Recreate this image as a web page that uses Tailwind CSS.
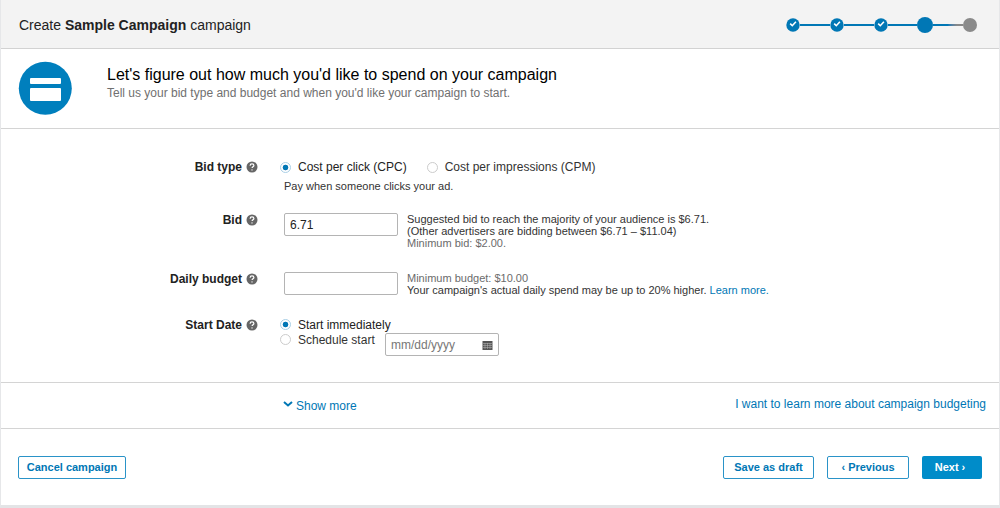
<!DOCTYPE html>
<html lang="en">
<head>
<meta charset="utf-8">
<meta name="viewport" content="width=device-width, initial-scale=1">
<title>Create campaign</title>
<script src="https://cdn.jsdelivr.net/npm/@tailwindcss/browser@4"></script>
</head>
<body class="min-h-screen bg-white font-['Liberation_Sans',Arial,sans-serif] text-[12px] text-[#333]">
<svg class="hidden" aria-hidden="true">
  <symbol id="help" viewBox="0 0 12 12"><circle cx="6" cy="6" r="5.5" fill="#666"/><path d="M4.1 4.7C4.1 3.5 4.9 2.9 6 2.9s1.9.7 1.9 1.7c0 1.2-1.8 1.3-1.8 2.5" fill="none" stroke="#fff" stroke-width="1.2"/><circle cx="6" cy="8.9" r=".7" fill="#fff"/></symbol>
  <symbol id="done" viewBox="0 0 14 14"><circle cx="7" cy="7" r="6.7" fill="#0077b5"/><path d="M4.2 5.6l2.1 2.1 3.6-3.9" fill="none" stroke="#fff" stroke-width="1.6"/></symbol>
</svg>
<div class="flex min-h-screen flex-col border-x border-b-3 border-x-[#e6e7e9] border-b-[#e3e4e6]">
  <header class="flex h-[49px] items-center justify-between border-b border-[#d2d2d2] bg-[#f3f3f3] pt-px pr-[22px] pl-[18px]">
    <h1 class="text-[14px] leading-5 text-[#222]">Create <strong>Sample Campaign</strong> campaign</h1>
    <div class="flex w-[191px] items-center" role="img" aria-label="Step 4 of 5">
      <svg class="size-[14px]"><use href="#done"/></svg>
      <span class="h-[2px] flex-1 bg-[#0077b5]"></span>
      <svg class="size-[14px]"><use href="#done"/></svg>
      <span class="h-[2px] flex-1 bg-[#0077b5]"></span>
      <svg class="size-[14px]"><use href="#done"/></svg>
      <span class="h-[2px] flex-1 bg-[#0077b5]"></span>
      <span class="size-4 rounded-full bg-[#0077b5]"></span>
      <span class="h-[2px] flex-1 bg-linear-to-r from-[#0077b5] from-50% to-[#888] to-80%"></span>
      <span class="size-[14px] rounded-full bg-[#8a8a8a]"></span>
    </div>
  </header>

  <section class="flex h-20 border-b border-[#d4d4d4] pt-[12px] pl-[17px]">
    <svg class="size-[54px]" viewBox="0 0 54 54" aria-hidden="true"><circle cx="27.3" cy="27.3" r="26.5" fill="#007fbd"/><rect x="12" y="17" width="31" height="6" rx="1" fill="#fff"/><rect x="12" y="27" width="31" height="13" rx="1" fill="#fff"/></svg>
    <div class="pt-[4px] pl-[35px]">
      <h2 class="text-[16px] leading-5 text-black">Let's figure out how much you'd like to spend on your campaign</h2>
      <p class="text-[12px] leading-4 text-[#707070]">Tell us your bid type and budget and when you'd like your campaign to start.</p>
    </div>
  </section>

  <form id="campaign" class="flex h-[254px] flex-col border-b border-[#d4d4d4] pt-[30px]">
    <div class="flex h-[54px]" role="radiogroup" aria-labelledby="bidtype">
      <div class="flex h-4 w-[257px] items-center justify-end gap-1"><span id="bidtype" class="font-bold text-[#222]">Bid type</span><svg class="size-3"><use href="#help"/></svg></div>
      <div class="pl-[22px]">
        <div class="flex h-4 items-center">
          <input id="cpc" type="radio" name="bid" checked class="size-[11px] appearance-none rounded-full border border-[#a9cfe6] bg-white checked:bg-radial checked:from-[#0077b5] checked:from-40% checked:to-white checked:to-50%">
          <label for="cpc" class="pl-[7px] text-[#222]">Cost per click (CPC)</label>
          <input id="cpm" type="radio" name="bid" class="ml-5 size-[11px] appearance-none rounded-full border border-[#ccc] bg-white checked:bg-radial checked:from-[#0077b5] checked:from-40% checked:to-white checked:to-50%">
          <label for="cpm" class="pl-[7px]">Cost per impressions (CPM)</label>
        </div>
        <p class="pt-[3px] pl-1 text-[11px] leading-4">Pay when someone clicks your ad.</p>
      </div>
    </div>
    <div class="flex h-[59px]">
      <div class="flex h-[14px] w-[257px] items-center justify-end gap-1"><label for="amount" class="font-bold text-[#222]">Bid</label><svg class="size-3"><use href="#help"/></svg></div>
      <input id="amount" type="text" value="6.71" class="ml-[26px] h-[23px] w-[114px] rounded-xs border border-[#b4b4b4] px-[5px] text-[12px] text-[#222]">
      <p class="pl-[9px] text-[11px] leading-3">Suggested bid to reach the majority of your audience is $6.71.<br>(Other advertisers are bidding between $6.71 – $11.04)<br><span class="text-[#6b6b6b]">Minimum bid: $2.00.</span></p>
    </div>
    <div class="flex h-[45px]">
      <div class="flex h-[14px] w-[257px] items-center justify-end gap-1"><label for="daily" class="font-bold text-[#222]">Daily budget</label><svg class="size-3"><use href="#help"/></svg></div>
      <input id="daily" type="text" class="ml-[26px] h-[23px] w-[114px] rounded-xs border border-[#b4b4b4] px-[5px] text-[12px]">
      <p class="pl-[9px] text-[11px] leading-3"><span class="text-[#6b6b6b]">Minimum budget: $10.00</span><br>Your campaign's actual daily spend may be up to 20% higher. <a href="#" class="text-[#0077b5]">Learn more.</a></p>
    </div>
    <div class="flex" role="radiogroup" aria-labelledby="startdate">
      <div class="flex h-4 w-[257px] items-center justify-end gap-1"><span id="startdate" class="font-bold text-[#222]">Start Date</span><svg class="size-3"><use href="#help"/></svg></div>
      <div class="pl-[22px]">
        <div class="flex h-[15px] items-center">
          <input id="now" type="radio" name="start" checked class="size-[11px] appearance-none rounded-full border border-[#a9cfe6] bg-white checked:bg-radial checked:from-[#0077b5] checked:from-40% checked:to-white checked:to-50%">
          <label for="now" class="pl-[7px] text-[#222]">Start immediately</label>
        </div>
        <div class="flex h-6 items-start">
          <div class="flex h-[15px] w-[105px] items-center">
            <input id="later" type="radio" name="start" class="size-[11px] appearance-none rounded-full border border-[#ccc] bg-white checked:bg-radial checked:from-[#0077b5] checked:from-40% checked:to-white checked:to-50%">
            <label for="later" class="pl-[7px]">Schedule start</label>
          </div>
          <div class="mt-px flex h-[23px] w-[114px] items-center rounded-xs border border-[#b4b4b4] pr-[5px] pl-[5px]">
            <input type="text" aria-label="Start date" placeholder="mm/dd/yyyy" class="w-0 min-w-0 flex-1 text-[12px] placeholder:text-[#777]">
            <svg class="mt-[2px] h-[9px] w-[11px]" viewBox="0 0 11 9" aria-hidden="true"><path d="M.5 0h10v9H.5z" fill="#555"/><path d="M1 2.5h9M1 4.5h9M1 6.5h9M3 2v6M5.5 2v6M8 2v6" stroke="#bbb" stroke-width=".5"/></svg>
          </div>
        </div>
      </div>
    </div>
  </form>

  <div class="flex h-[46px] justify-between border-b border-[#d4d4d4] pt-[13px] pr-[13px] pl-[282px] text-[12px] text-[#0077b5]">
    <button type="button" class="flex h-5 items-center gap-[3px]"><svg class="mb-1 h-[6px] w-[10px]" viewBox="0 0 10 6" fill="none" stroke="#0077b5" stroke-width="2" aria-hidden="true"><path d="M1 1l4 3.5L9 1"/></svg>Show more</button>
    <a href="#" class="h-4 leading-4">I want to learn more about campaign budgeting</a>
  </div>

  <footer class="flex items-start justify-between pt-[27px] pr-[17px] pl-[17px] text-[11px] font-bold">
    <button type="button" class="h-[23px] w-[108px] rounded-xs border border-[#2a93c8] text-[#0077b5]">Cancel campaign</button>
    <div class="flex gap-[13px]">
      <button type="button" class="h-[23px] w-[91px] rounded-xs border border-[#2a93c8] text-[#0077b5]">Save as draft</button>
      <button type="button" class="h-[23px] w-[82px] rounded-xs border border-[#2a93c8] text-[#0077b5]">‹ Previous</button>
      <button form="campaign" class="h-[23px] w-[60px] rounded-xs bg-[#008cc9] pr-1 text-white">Next ›</button>
    </div>
  </footer>
</div>
</body>
</html>
